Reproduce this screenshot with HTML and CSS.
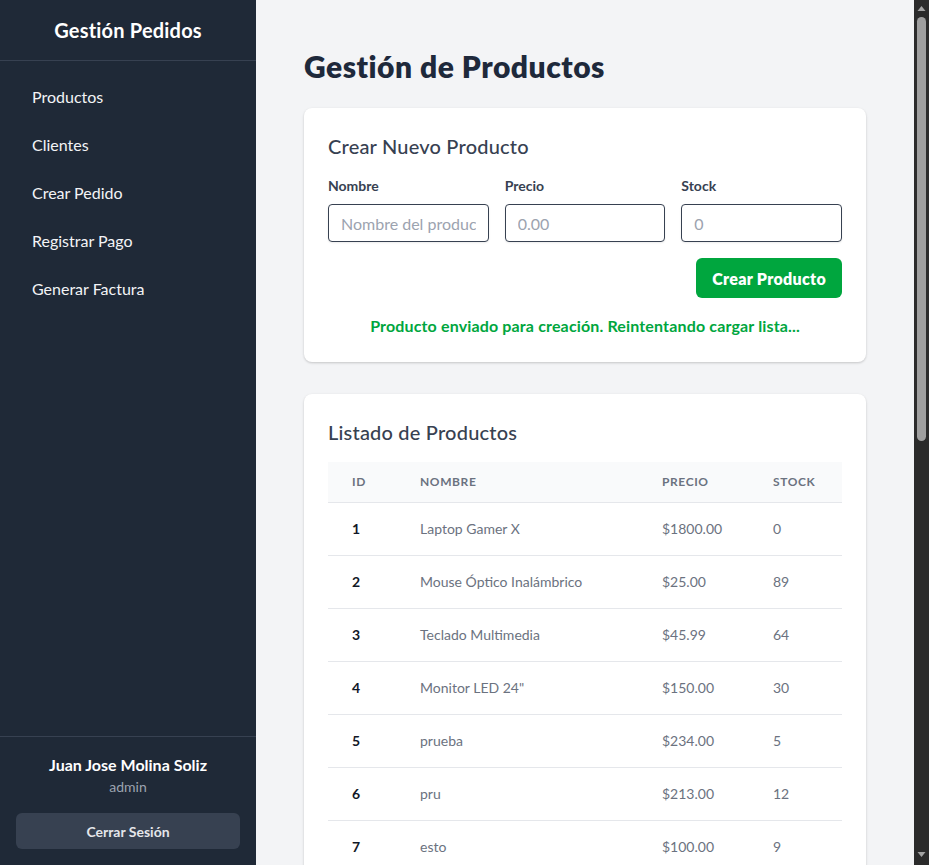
FILE: index.html
```html
<!DOCTYPE html>
<html lang="es">
<head>
<meta charset="utf-8">
<title>Gestión de Productos</title>
<link rel="stylesheet" href="styles.css">
</head>
<body>
<div class="layout">
  <aside class="sidebar">
    <div class="brand">Gestión Pedidos</div>
    <nav class="nav">
      <a class="nav-item" href="#">Productos</a>
      <a class="nav-item" href="#">Clientes</a>
      <a class="nav-item" href="#">Crear Pedido</a>
      <a class="nav-item" href="#">Registrar Pago</a>
      <a class="nav-item" href="#">Generar Factura</a>
    </nav>
    <div class="user">
      <div class="user-name">Juan Jose Molina Soliz</div>
      <div class="user-role">admin</div>
      <button class="logout">Cerrar Sesión</button>
    </div>
  </aside>
  <main class="main">
    <h1 class="page-title">Gestión de Productos</h1>
    <section class="card">
      <h2 class="card-title">Crear Nuevo Producto</h2>
      <div class="form-grid">
        <label class="field">
          <span class="label">Nombre</span>
          <input class="input" type="text" placeholder="Nombre del producto">
        </label>
        <label class="field">
          <span class="label">Precio</span>
          <input class="input" type="text" placeholder="0.00">
        </label>
        <label class="field">
          <span class="label">Stock</span>
          <input class="input" type="text" placeholder="0">
        </label>
      </div>
      <div class="actions">
        <button class="btn-primary">Crear Producto</button>
      </div>
      <p class="message">Producto enviado para creación. Reintentando cargar lista...</p>
    </section>
    <section class="card">
      <h2 class="card-title">Listado de Productos</h2>
      <table class="table">
        <thead>
          <tr>
            <th class="col-id">ID</th>
            <th class="col-name">Nombre</th>
            <th class="col-price">Precio</th>
            <th class="col-stock">Stock</th>
          </tr>
        </thead>
        <tbody>
          <tr><td class="cell-id">1</td><td>Laptop Gamer X</td><td>$1800.00</td><td>0</td></tr>
          <tr><td class="cell-id">2</td><td>Mouse Óptico Inalámbrico</td><td>$25.00</td><td>89</td></tr>
          <tr><td class="cell-id">3</td><td>Teclado Multimedia</td><td>$45.99</td><td>64</td></tr>
          <tr><td class="cell-id">4</td><td>Monitor LED 24"</td><td>$150.00</td><td>30</td></tr>
          <tr><td class="cell-id">5</td><td>prueba</td><td>$234.00</td><td>5</td></tr>
          <tr><td class="cell-id">6</td><td>pru</td><td>$213.00</td><td>12</td></tr>
          <tr><td class="cell-id">7</td><td>esto</td><td>$100.00</td><td>9</td></tr>
        </tbody>
      </table>
    </section>
  </main>
</div>
<div class="scrollbar" aria-hidden="true">
  <svg class="sb-arrow sb-up" width="15" height="17" viewBox="0 0 15 17"><path d="M3.5 11 L7.5 6 L11.5 11 Z" fill="#a3a3a3"/></svg>
  <div class="sb-thumb"></div>
  <svg class="sb-arrow sb-down" width="15" height="17" viewBox="0 0 15 17"><path d="M3.5 6 L11.5 6 L7.5 11 Z" fill="#a3a3a3"/></svg>
</div>
</body>
</html>
```

FILE: styles.css
```css
* { box-sizing: border-box; }
body {
  margin: 0;
  font-family: Lato, "Open Sans", "Noto Sans", sans-serif;
  background: #f3f4f6;
  color: #1f2937;
}
.layout {
  display: flex;
  align-items: flex-start;
  margin-right: 15px;
}
.sidebar {
  position: sticky;
  top: 0;
  width: 256px;
  flex-shrink: 0;
  height: 100vh;
  background: #1f2937;
  color: #fff;
  display: flex;
  flex-direction: column;
}
.brand {
  height: 61px;
  padding: 16px;
  text-align: center;
  font-size: 20px;
  line-height: 28px;
  font-weight: 700;
  letter-spacing: 0.2px;
  border-bottom: 1px solid #374151;
}
.nav {
  flex: 1;
  padding: 12px 16px;
  display: flex;
  flex-direction: column;
}
.nav-item {
  display: block;
  padding: 12px 16px;
  font-size: 16px;
  line-height: 24px;
  color: #f3f4f6;
  text-decoration: none;
  border-radius: 6px;
}
.user {
  border-top: 1px solid #374151;
  padding: 16px;
  text-align: center;
}
.user-name {
  font-size: 16px;
  line-height: 24px;
  font-weight: 700;
}
.user-role {
  font-size: 14px;
  line-height: 20px;
  color: #9ca3af;
}
.logout {
  margin-top: 16px;
  width: 100%;
  height: 36px;
  border: 0;
  border-radius: 6px;
  background: #374151;
  color: #e5e7eb;
  font-family: inherit;
  font-size: 14px;
  font-weight: 700;
}
.main {
  flex: 1;
  padding: 48px;
  min-height: 1700px;
}
.page-title {
  margin: 0 0 24px;
  font-size: 30px;
  line-height: 36px;
  font-weight: 800;
  letter-spacing: 0.5px;
  color: #1e293b;
}
.card {
  background: #fff;
  border-radius: 8px;
  box-shadow: 0 1px 3px rgba(0,0,0,0.12), 0 1px 2px rgba(0,0,0,0.08);
  padding: 24px;
  margin-bottom: 32px;
}
.card-title {
  margin: 0 0 16px;
  font-size: 20px;
  line-height: 28px;
  font-weight: 500;
  letter-spacing: 0.2px;
  color: #374151;
}
.form-grid {
  display: grid;
  grid-template-columns: repeat(3, 1fr);
  gap: 16px;
}
.field {
  display: flex;
  flex-direction: column;
  min-width: 0;
}
.label {
  font-size: 14px;
  line-height: 20px;
  font-weight: 700;
  color: #374151;
  margin-bottom: 8px;
}
.input {
  height: 38px;
  width: 100%;
  border: 1px solid #374151;
  border-radius: 4px;
  padding: 0 12px;
  font-family: inherit;
  font-size: 16px;
  color: #111827;
  background: #fff;
  box-shadow: 0 1px 2px rgba(0,0,0,0.08);
}
.input::placeholder {
  color: #9ca3af;
}
.actions {
  display: flex;
  justify-content: flex-end;
  margin-top: 16px;
}
.btn-primary {
  height: 40px;
  padding: 0 16px;
  border: 0;
  border-radius: 6px;
  background: #00a63e;
  color: #fff;
  font-family: inherit;
  font-size: 16px;
  font-weight: 800;
  letter-spacing: 0.3px;
}
.message {
  margin: 16px 0 0;
  text-align: center;
  font-size: 16px;
  line-height: 24px;
  font-weight: 700;
  letter-spacing: 0.15px;
  color: #00a63e;
}
.table {
  width: 100%;
  border-collapse: collapse;
}
.table thead tr {
  background: #f9fafb;
  border-bottom: 1px solid #e5e7eb;
}
.table th {
  text-align: left;
  padding: 12px 24px;
  font-size: 12px;
  line-height: 16px;
  font-weight: 700;
  letter-spacing: 0.05em;
  text-transform: uppercase;
  color: #6b7280;
}
.col-id { width: 68px; }
.col-name { width: 242px; }
.col-price { width: 111px; }
.table td {
  padding: 16px 24px;
  font-size: 14px;
  line-height: 20px;
  color: #6b7280;
  border-bottom: 1px solid #e5e7eb;
}
.table td.cell-id {
  color: #111827;
  font-weight: 700;
}
.scrollbar {
  position: fixed;
  top: 0;
  right: 0;
  width: 15px;
  height: 100vh;
  background: #2b2b2b;
  display: flex;
  flex-direction: column;
  align-items: center;
}
.sb-arrow {
  flex-shrink: 0;
  display: block;
}
.sb-thumb {
  width: 9px;
  height: 424px;
  background: #9f9f9f;
  border-radius: 5px;
}
.sb-down {
  margin-top: auto;
  margin-bottom: 2px;
}
```
